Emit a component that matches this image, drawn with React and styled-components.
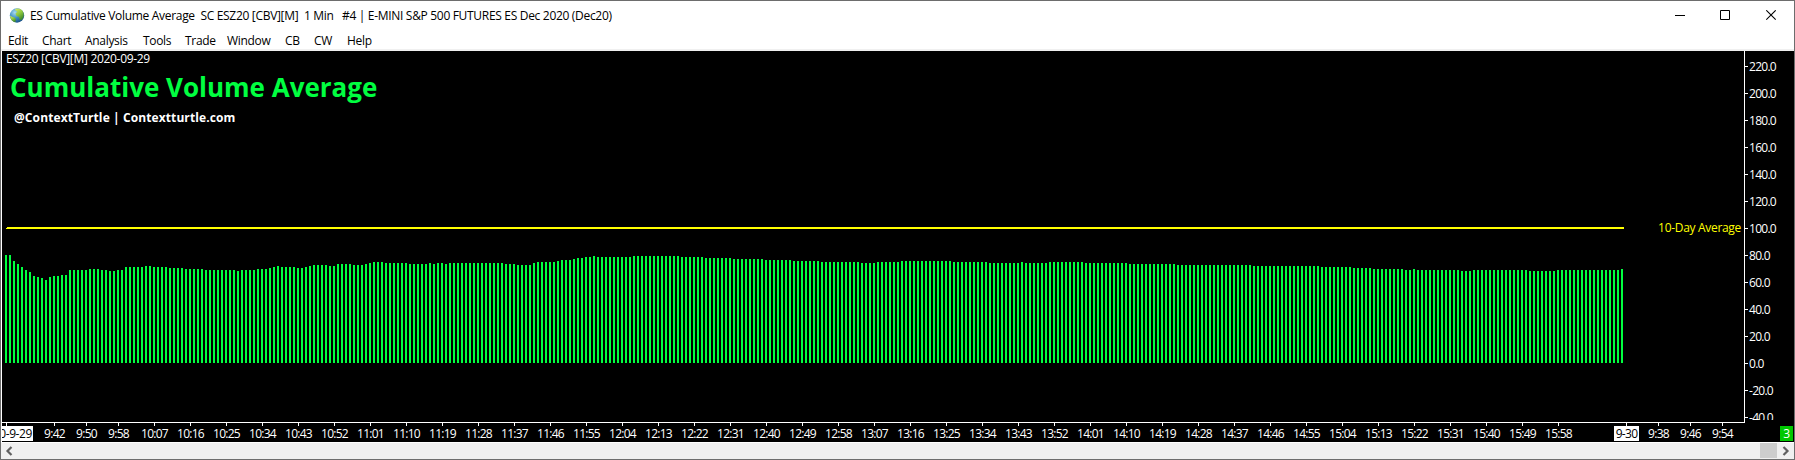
import React from "react";
import styled, { createGlobalStyle } from "styled-components";

const GREEN = "#00ff40";
const YELLOW = "#ffff00";

const GlobalStyle = createGlobalStyle`
  * { box-sizing: border-box; }
  html, body { margin: 0; padding: 0; background: #fff; overflow: hidden; }
  body { font: 12px/16px "Open Sans", "Noto Sans", sans-serif; letter-spacing: -0.31px; color: #000; }
`;

const Window = styled.div`
  width: 1795px;
  height: 460px;
  border: 1px solid #6d6d6d;
  background: #fff;
  display: flex;
  flex-direction: column;
  white-space: pre;
`;

const TitleBar = styled.header`
  height: 27px;
  display: flex;
  align-items: flex-start;
  padding: 6px 17px 0 8px;
`;

const Title = styled.h1`
  margin: 1px auto 0 5px;
  font: inherit;
`;

const Controls = styled.div`
  display: flex;
  gap: 35px;
  padding-top: 3px;
`;

const MenuBar = styled.nav`
  height: 21px;
  padding: 5px 0 0 7px;
  display: flex;
`;

const MenuItem = styled.span`
  width: ${p => p.$width}px;
  flex: none;
`;

const Divider = styled.div`
  height: 2px;
  background: #f0f0f0;
`;

const Chart = styled.main`
  height: 392px;
  border-left: 1px solid #fff;
  border-bottom: 1px solid #fff;
  background: #000;
  color: #fff;
  display: flex;
  flex-direction: column;
`;

const ChartBody = styled.div`
  display: flex;
  height: 372px;
`;

const Plot = styled.section`
  position: relative;
  width: 1743px;
  border-right: 1px solid #fff;
  border-bottom: 1px solid #fff;
  padding-left: 4px;
`;

const Series = styled.svg`
  position: absolute;
  left: 0;
  top: 0;
`;

const SymbolLine = styled.div`
  position: relative;
`;

const Heading = styled.h2`
  position: relative;
  margin: 1px 0 0 4px;
  font-size: 26px;
  line-height: 38px;
  font-weight: 700;
  letter-spacing: 0;
  color: ${GREEN};
`;

const Credit = styled.div`
  position: relative;
  margin: 4px 0 0 8px;
  font-weight: 700;
  letter-spacing: 0.1px;
`;

const AverageLabel = styled.span`
  position: absolute;
  right: 3px;
  top: 169px;
  color: ${YELLOW};
`;

const PriceAxis = styled.aside`
  width: 49px;
  height: 369px;
  padding-top: 2px;
  overflow: hidden;
`;

const Price = styled.div`
  display: flex;
  align-items: center;
  height: 27px;
  letter-spacing: -0.72px;

  &::before {
    content: "";
    width: 3px;
    height: 1px;
    margin-right: 1px;
    background: #fff;
  }
`;

const TimeAxis = styled.div`
  display: flex;
  height: 19px;
`;

const TimeSlot = styled.div`
  flex: none;
  width: ${p => p.$width}px;
  margin-left: ${p => p.$gap}px;
  display: flex;
  flex-direction: column;
  align-items: center;
  letter-spacing: -0.72px;

  &::before {
    content: "";
    width: 1px;
    height: 3px;
    background: #fff;
  }
`;

const TimeLabel = styled.span`
  height: 15px;
  line-height: 15px;
`;

const DateLabel = styled(TimeLabel)`
  width: 25px;
  text-align: center;
  background: #fff;
  color: #000;
`;

const FirstDate = styled.div`
  flex: none;
  width: 31px;

  &::before {
    content: "";
    display: block;
    width: 1px;
    height: 3px;
    margin-left: 4px;
    background: #fff;
  }
`;

const FirstDateLabel = styled.div`
  display: flex;
  justify-content: flex-end;
  height: 15px;
  line-height: 15px;
  padding-right: 1px;
  overflow: hidden;
  background: #fff;
  color: #000;
  letter-spacing: -0.4px;
`;

const Badge = styled.div`
  width: 13px;
  height: 15px;
  margin: 3px 1px 0 auto;
  line-height: 15px;
  text-align: center;
  background: #00c800;
`;

const ScrollBar = styled.footer`
  height: 16px;
  background: #f0f0f0;
  display: flex;
  align-items: center;
  padding: 0 4px;
`;

const Thumb = styled.div`
  width: 17px;
  height: 15px;
  margin: 0 5px 0 auto;
  align-self: flex-start;
  background: #cdcdcd;
`;

const MENU = [
  ["Edit", 34], ["Chart", 43], ["Analysis", 58], ["Tools", 42], ["Trade", 42],
  ["Window", 58], ["CB", 29], ["CW", 33], ["Help", 40],
];

// Bar tops as [number of bars, y of the top edge]; one bar per minute.
const RUNS = [
  [2, 255], [1, 261], [1, 264], [1, 267], [1, 270], [1, 272], [1, 276], [1, 277], [1, 278], [1, 280],
  [1, 277], [2, 276], [2, 275], [5, 270], [3, 269], [2, 270], [2, 271], [2, 270], [5, 267], [2, 266],
  [4, 267], [4, 268], [5, 269], [8, 270], [1, 271], [4, 270], [3, 269], [1, 268], [1, 267], [1, 266],
  [4, 267], [2, 268], [1, 267], [1, 266], [4, 265], [2, 266], [4, 264], [3, 265], [1, 264], [1, 263],
  [3, 262], [6, 263], [5, 264], [1, 263], [1, 264], [2, 263], [1, 264], [14, 263], [3, 264], [4, 265],
  [1, 263], [5, 262], [1, 261], [3, 260], [1, 259], [2, 258], [2, 257], [1, 256], [9, 257], [12, 256],
  [6, 257], [7, 258], [8, 259], [7, 260], [7, 261], [10, 262], [4, 263], [6, 262], [13, 261], [9, 262],
  [8, 263], [1, 262], [6, 263], [9, 262], [11, 263], [12, 264], [19, 265], [17, 266], [8, 267], [5, 268],
  [8, 269], [2, 270], [1, 269], [11, 270], [3, 271], [14, 270], [7, 271], [16, 270], [1, 269],
];
const TOPS = RUNS.flatMap(([count, top]) => Array(count).fill(top - 51));
const BASELINE = 312;

const PRICES = Array.from({ length: 14 }, (_, i) => (220 - i * 20).toFixed(1));

const clock = minutes => `${Math.floor(minutes / 60)}:${String(minutes % 60).padStart(2, "0")}`;
const NINE_MINUTE_TIMES = Array.from({ length: 40 }, (_, i) => clock(607 + i * 9));

function Globe() {
  return (
    <svg width="16" height="16" viewBox="0 0 16 16">
      <defs>
        <radialGradient id="sea" cx="0.35" cy="0.3" r="0.75">
          <stop offset="0" stopColor="#a9dcf2" />
          <stop offset="0.5" stopColor="#3f8fc4" />
          <stop offset="1" stopColor="#174f82" />
        </radialGradient>
        <linearGradient id="land" x1="0" y1="0" x2="0.6" y2="1">
          <stop offset="0" stopColor="#d8ec72" />
          <stop offset="0.55" stopColor="#8cc63c" />
          <stop offset="1" stopColor="#3f8a2c" />
        </linearGradient>
      </defs>
      <circle cx="8" cy="8.500" r="7.200" fill="url(#sea)" />
      <path d="M6 2.200C9 .8 12.500 2 14 4.800c1.500 3 .8 6-1.500 8.200L10.500 12.500l-.5-2.500L7.500 9 6.500 6.500 8.300 4.800 6.800 3.800z" fill="url(#land)" />
      <path d="M1.200 8.500 3 9.800l3 1 1 1.700-.7 2.800C3.500 14.800 1.200 12 1.200 8.500z" fill="url(#land)" />
    </svg>
  );
}

export default function App() {
  return (
    <>
      <GlobalStyle />
      <Window>
        <TitleBar>
          <Globe />
          <Title>ES Cumulative Volume Average  SC ESZ20 [CBV][M]  1 Min   #4 | E-MINI S&amp;P 500 FUTURES ES Dec 2020 (Dec20)</Title>
          <Controls>
            <svg width="11" height="11"><path d="M1 5.500h10" stroke="#000" /></svg>
            <svg width="11" height="11"><path d="M.5.5h9v9h-9z" fill="none" stroke="#000" /></svg>
            <svg width="11" height="11"><path d="M.3.300l9.400 9.400M9.700.300l-9.400 9.400" stroke="#000" strokeWidth="1.100" /></svg>
          </Controls>
        </TitleBar>
        <MenuBar>
          {MENU.map(([name, width]) => <MenuItem key={name} $width={width}>{name}</MenuItem>)}
        </MenuBar>
        <Divider />
        <Chart>
          <ChartBody>
            <Plot>
              <Series width="1742" height="371" shapeRendering="crispEdges">
                <path fill={YELLOW} d="M5 176H1622V178H4V177H5Z" />
                <path
                  fill={GREEN}
                  d={TOPS.map((top, i) => `M${3 + i * 4} ${top}h2V${BASELINE}h-2z`).join("")}
                />
              </Series>
              <SymbolLine>ESZ20 [CBV][M] 2020-09-29</SymbolLine>
              <Heading>Cumulative Volume Average</Heading>
              <Credit>@ContextTurtle | Contextturtle.com</Credit>
              <AverageLabel>10-Day Average</AverageLabel>
            </Plot>
            <PriceAxis>
              {PRICES.map(price => <Price key={price}>{price}</Price>)}
            </PriceAxis>
          </ChartBody>
          <TimeAxis>
            <FirstDate><FirstDateLabel>0-9-29</FirstDateLabel></FirstDate>
            <TimeSlot $width={31} $gap={6}><TimeLabel>9:42</TimeLabel></TimeSlot>
            <TimeSlot $width={31} $gap={1}><TimeLabel>9:50</TimeLabel></TimeSlot>
            <TimeSlot $width={31} $gap={1}><TimeLabel>9:58</TimeLabel></TimeSlot>
            {NINE_MINUTE_TIMES.map((time, i) => (
              <TimeSlot key={time} $width={35} $gap={i ? 1 : 3}><TimeLabel>{time}</TimeLabel></TimeSlot>
            ))}
            <TimeSlot $width={31} $gap={35}><DateLabel>9-30</DateLabel></TimeSlot>
            <TimeSlot $width={31} $gap={1}><TimeLabel>9:38</TimeLabel></TimeSlot>
            <TimeSlot $width={31} $gap={1}><TimeLabel>9:46</TimeLabel></TimeSlot>
            <TimeSlot $width={31} $gap={1}><TimeLabel>9:54</TimeLabel></TimeSlot>
            <Badge>3</Badge>
          </TimeAxis>
        </Chart>
        <ScrollBar>
          <svg width="8" height="10"><path d="M6.500 1 2.500 5l4 4" fill="none" stroke="#606060" strokeWidth="2.200" /></svg>
          <Thumb />
          <svg width="8" height="10"><path d="M1.500 1l4 4-4 4" fill="none" stroke="#606060" strokeWidth="2.200" /></svg>
        </ScrollBar>
      </Window>
    </>
  );
}
